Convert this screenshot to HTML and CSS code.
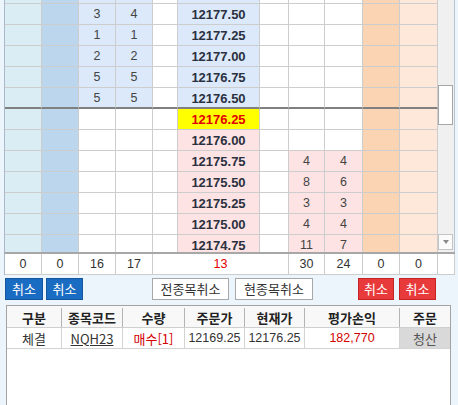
FILE: index.html
```html
<!DOCTYPE html>
<html lang="ko">
<head>
<meta charset="utf-8">
<title>호가주문</title>
<link rel="stylesheet" href="styles.css">
</head>
<body>
<div class="app">
  <div class="board">
    <div class="grid">
      <div class="row partial">
        <div></div><div></div><div class="ask"></div><div class="ask"></div><div></div><div class="ask"></div><div></div><div></div><div></div><div></div><div></div>
      </div>
      <div class="row">
        <div></div><div></div><div class="ask">3</div><div class="ask">4</div><div></div><div class="ask px">12177.50</div><div></div><div></div><div></div><div></div><div></div>
      </div>
      <div class="row">
        <div></div><div></div><div class="ask">1</div><div class="ask">1</div><div></div><div class="ask px">12177.25</div><div></div><div></div><div></div><div></div><div></div>
      </div>
      <div class="row">
        <div></div><div></div><div class="ask">2</div><div class="ask">2</div><div></div><div class="ask px">12177.00</div><div></div><div></div><div></div><div></div><div></div>
      </div>
      <div class="row">
        <div></div><div></div><div class="ask">5</div><div class="ask">5</div><div></div><div class="ask px">12176.75</div><div></div><div></div><div></div><div></div><div></div>
      </div>
      <div class="row mid">
        <div></div><div></div><div class="ask">5</div><div class="ask">5</div><div></div><div class="ask px">12176.50</div><div></div><div></div><div></div><div></div><div></div>
      </div>
      <div class="row">
        <div></div><div></div><div></div><div></div><div></div><div class="cur px">12176.25</div><div></div><div></div><div></div><div></div><div></div>
      </div>
      <div class="row">
        <div></div><div></div><div></div><div></div><div></div><div class="bid px">12176.00</div><div></div><div></div><div></div><div></div><div></div>
      </div>
      <div class="row">
        <div></div><div></div><div></div><div></div><div></div><div class="bid px">12175.75</div><div></div><div class="bid">4</div><div class="bid">4</div><div></div><div></div>
      </div>
      <div class="row">
        <div></div><div></div><div></div><div></div><div></div><div class="bid px">12175.50</div><div></div><div class="bid">8</div><div class="bid">6</div><div></div><div></div>
      </div>
      <div class="row">
        <div></div><div></div><div></div><div></div><div></div><div class="bid px">12175.25</div><div></div><div class="bid">3</div><div class="bid">3</div><div></div><div></div>
      </div>
      <div class="row">
        <div></div><div></div><div></div><div></div><div></div><div class="bid px">12175.00</div><div></div><div class="bid">4</div><div class="bid">4</div><div></div><div></div>
      </div>
      <div class="row">
        <div></div><div></div><div></div><div></div><div></div><div class="bid px">12174.75</div><div></div><div class="bid">11</div><div class="bid">7</div><div></div><div></div>
      </div>
    </div>
    <div class="vscroll">
      <div class="thumb"></div>
      <div class="down"><span class="tri"></span></div>
    </div>
  </div>

  <div class="sum">
    <div>0</div><div>0</div><div>16</div><div>17</div><div class="red">13</div><div>30</div><div>24</div><div>0</div><div>0</div><div></div>
  </div>

  <div class="actions">
    <button class="btn blue b1">취소</button>
    <button class="btn blue b2">취소</button>
    <button class="btn white w1">전종목취소</button>
    <button class="btn white w2">현종목취소</button>
    <button class="btn red-btn r1">취소</button>
    <button class="btn red-btn r2">취소</button>
  </div>

  <div class="orders">
    <div class="ohead">
      <div>구분</div><div>종목코드</div><div>수량</div><div>주문가</div><div>현재가</div><div>평가손익</div><div>주문</div>
    </div>
    <div class="orow">
      <div>체결</div><div class="code">NQH23</div><div class="redt">매수[1]</div><div class="num">12169.25</div><div class="num">12176.25</div><div class="redt num">182,770</div><div class="clear">청산</div>
    </div>
  </div>
</div>
</body>
</html>
```

FILE: styles.css
```css
* { box-sizing: border-box; }

html, body {
  margin: 0;
  padding: 0;
}

body {
  width: 458px;
  height: 405px;
  overflow: hidden;
  background: #edf5fc;
  font-family: "Liberation Sans", "Noto Sans CJK KR", sans-serif;
  font-size: 12px;
  color: #333;
}

.app {
  padding-left: 4px;
}

.board {
  display: flex;
  width: 451px;
  height: 252px;
  border-left: 1px solid #a9b9c9;
  background: #fff;
  overflow: hidden;
}

.grid {
  width: 433px;
  height: 252px;
  overflow: hidden;
}

.row {
  display: grid;
  grid-template-columns: 37px 37px 37px 37px 25px 82px 29px 36px 38px 37px 38px;
  height: 21px;
}

.row > div {
  border-right: 1px solid #cdcdcd;
  border-bottom: 1px solid #cdcdcd;
  display: flex;
  align-items: center;
  justify-content: center;
  color: #444;
  font-size: 12.5px;
}

.row.partial { height: 4px; }

.row.mid > div { border-bottom: 2px solid #808080; }

.row > div:nth-child(1) { background: #daedf4; }
.row > div:nth-child(2) { background: #bcd6ee; }
.row > div:nth-child(10) { background: #fbd4b3; }
.row > div:nth-child(11) { background: #fde8d9; }

.row > .ask { background: #dbe9fa; }
.row > .bid { background: #fde3e3; }
.row > .cur { background: #ffff00; color: #e30000; }

.row > .px {
  font-weight: bold;
  font-size: 13px;
  color: #2b3040;
  padding-top: 1px;
}
.row > .cur.px { color: #e30000; }

.vscroll {
  width: 17px;
  height: 252px;
  background: #f0f0f0;
  border-right: 1px solid #b8c4d0;
  display: flex;
  flex-direction: column;
}

.thumb {
  margin-top: 85px;
  width: 15px;
  height: 40px;
  background: #fff;
  border: 1px solid #a6a6a6;
}

.down {
  margin-top: auto;
  margin-bottom: 2px;
  width: 15px;
  height: 16px;
  background: #fbfbfb;
  border: 1px solid #c4c4c4;
  display: flex;
  align-items: center;
  justify-content: center;
}

.tri {
  width: 0;
  height: 0;
  border-left: 3px solid transparent;
  border-right: 3px solid transparent;
  border-top: 4px solid #8a8a8a;
}

.sum {
  display: grid;
  grid-template-columns: 37px 37px 37px 37px 136px 36px 38px 37px 38px 17px;
  width: 451px;
  height: 23px;
  border-top: 2px solid #a7a7a7;
  border-left: 1px solid #a9b9c9;
  background: #fff;
}

.sum > div {
  border-right: 1px solid #cdcdcd;
  border-bottom: 1px solid #cdcdcd;
  display: flex;
  align-items: center;
  justify-content: center;
  color: #333;
  font-size: 12.5px;
}

.sum > .red { color: #e30000; }

.actions {
  display: flex;
  align-items: flex-start;
  height: 30px;
  padding-top: 3px;
  padding-left: 1px;
}

.btn {
  height: 22px;
  margin: 0;
  padding: 0;
  font-family: "Noto Sans CJK KR", sans-serif;
  font-size: 13px;
  line-height: 20px;
  cursor: pointer;
}

.blue {
  background: #1a6cc2;
  border: 1px solid #15569c;
  color: #fff;
}

.white {
  background: #fff;
  border: 1px solid #a8a8a8;
  color: #333;
}

.red-btn {
  background: #e83a3a;
  border: 1px solid #c42424;
  color: #fff;
}

.b1 { width: 38px; }
.b2 { width: 37px; margin-left: 3px; }
.w1 { width: 77px; margin-left: 69px; }
.w2 { width: 78px; margin-left: 6px; }
.r1 { width: 36px; margin-left: 45px; }
.r2 { width: 37px; margin-left: 5px; }

.orders {
  margin-left: 2px;
  width: 445px;
  height: 110px;
  border: 1px solid #a3a3a3;
  border-bottom: none;
  background: #fff;
  font-family: "Noto Sans CJK KR", sans-serif;
}

.ohead, .orow {
  display: grid;
  grid-template-columns: 55px 61px 62px 60px 60px 95px 50px;
}

.ohead {
  padding: 2px 0;
  background: #f8f8f8;
  border-bottom: 1px solid #cfcfcf;
  box-sizing: content-box;
  height: 17px;
}

.ohead > div {
  display: flex;
  align-items: center;
  justify-content: center;
  font-weight: bold;
  font-size: 13px;
  color: #222;
  border-right: 1px solid #b4b4b4;
}

.ohead > div:last-child { border-right: none; }

.orow { height: 21px; }

.orow > div {
  display: flex;
  align-items: center;
  justify-content: center;
  font-size: 13px;
  color: #333;
  border-right: 1px solid #d3d3d3;
  border-bottom: 1px solid #d3d3d3;
}

.orow > .num {
  font-family: "Liberation Sans", sans-serif;
  font-size: 12.5px;
}

.orow > div:last-child { border-right: none; }

.orow > .code { text-decoration: underline; }
.orow > .redt { color: #d40000; }
.orow > .clear { background: #d9d9d9; color: #555; }
```
